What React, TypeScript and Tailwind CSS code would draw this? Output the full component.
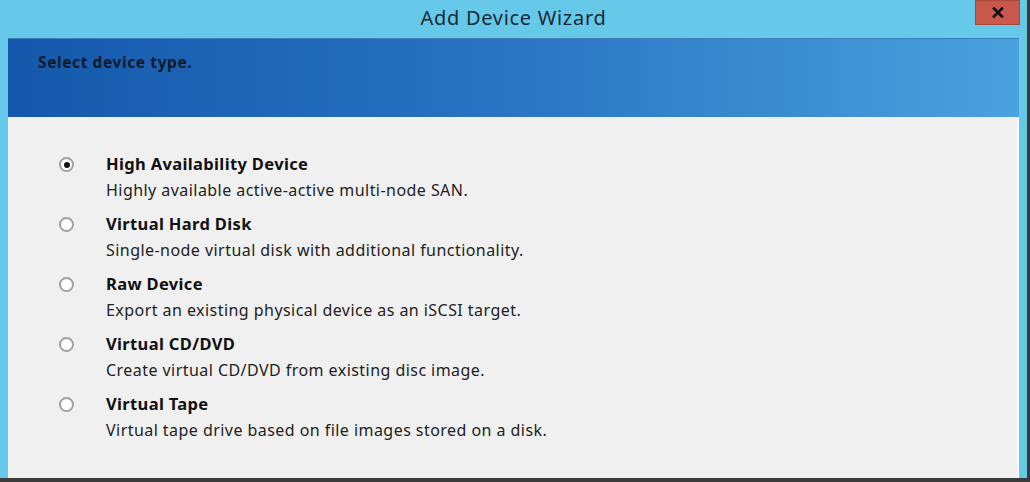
import React from "react";

const items = [
  { title: "High Availability Device", desc: "Highly available active-active multi-node SAN.", checked: true },
  { title: "Virtual Hard Disk", desc: "Single-node virtual disk with additional functionality." },
  { title: "Raw Device", desc: "Export an existing physical device as an iSCSI target." },
  { title: "Virtual CD/DVD", desc: "Create virtual CD/DVD from existing disc image." },
  { title: "Virtual Tape", desc: "Virtual tape drive based on file images stored on a disk." },
];

export default function App() {
  return (
    <div
      className="w-[1030px] h-[482px] flex flex-col overflow-hidden bg-[#f0f0f0]"
      style={{ fontFamily: '"Noto Sans", "Open Sans", sans-serif' }}
    >
      <div className="flex flex-1 min-h-0">
        <div className="flex-1 flex flex-col bg-[#66c9ea]">
          <div className="h-[38px] flex items-start">
            <div className="flex-1 h-[36px] flex items-center justify-center pl-[52px] text-[20px] tracking-[0.7px] text-[#1b2a36]">
              Add Device Wizard
            </div>
            <div className="w-[45px] h-[25px] mr-[7px] bg-[#c9584c] border border-[#a8463b] flex items-center justify-center">
              <svg width="12" height="11" viewBox="0 0 12 11">
                <path d="M2 1.5 L10 9.5 M10 1.5 L2 9.5" stroke="#111" strokeWidth="2.6" strokeLinecap="square" />
              </svg>
            </div>
          </div>
          <div className="flex-1 flex flex-col ml-[8px] mr-[8px] min-h-0">
            <div className="h-[79px] bg-gradient-to-r from-[#1558ab] via-[#2a74c2] to-[#4aa2de] pl-[30px] pt-[11px] border-t border-[#3f7fb9]">
              <span className="text-[15.5px] tracking-[0.6px] font-bold text-[#0b1a2e]">Select device type.</span>
            </div>
            <div className="flex-1 bg-[#f0f0f0] border-r-2 border-[#fbfbfb] pt-[34px] pl-[51px]">
              {items.map((it) => (
                <div key={it.title} className="flex h-[60px]">
                  <div className="w-[47px] pt-[6px]">
                    <div className="w-[15px] h-[15px] rounded-full border-2 border-[#a0a0a0] bg-white flex items-center justify-center">
                      {it.checked && <div className="w-[6px] h-[6px] rounded-full bg-[#111]" />}
                    </div>
                  </div>
                  <div className="flex flex-col">
                    <div className="text-[16.5px] tracking-[0.35px] font-bold text-[#111] leading-[26px]">{it.title}</div>
                    <div className="text-[16px] tracking-[0.45px] text-[#222] leading-[24px] mt-[1px]">{it.desc}</div>
                  </div>
                </div>
              ))}
            </div>
          </div>
        </div>
        <div className="w-[3px] bg-[#3a3a3a]" />
      </div>
      <div className="h-[4px] bg-[#3a3a3a]" />
    </div>
  );
}
